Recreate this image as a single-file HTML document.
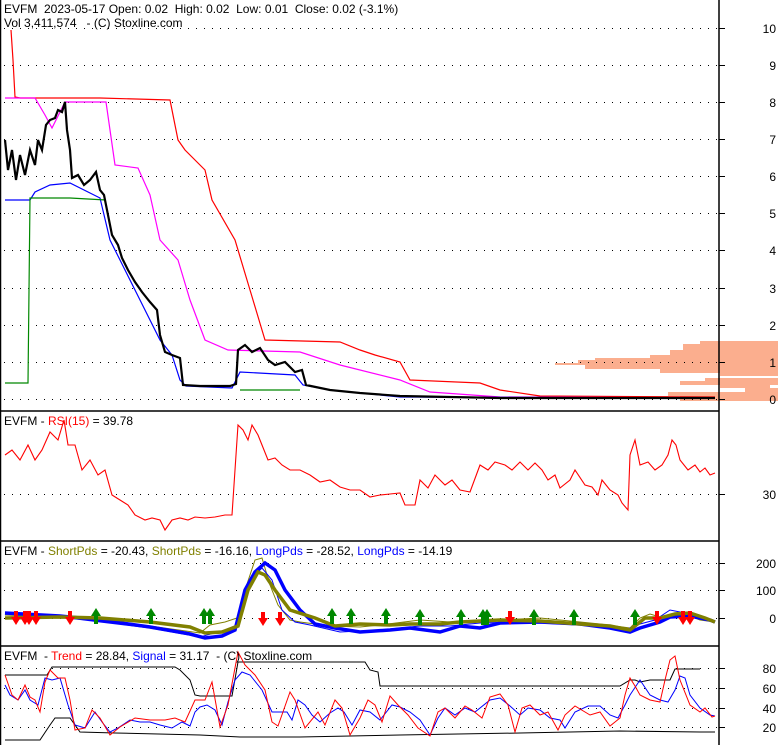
<!DOCTYPE html>
<html><head><meta charset="utf-8"><style>
html,body{margin:0;padding:0;background:#fff;}
svg{display:block;font-family:"Liberation Sans",Arial,sans-serif;}
text{white-space:pre;}
</style></head><body>
<svg width="780" height="745" viewBox="0 0 780 745" xmlns="http://www.w3.org/2000/svg" xml:space="preserve">
<rect width="780" height="745" fill="#fff"/>
<g fill="#fbae8e">
<rect x="700" y="341" width="78" height="3"/>
<rect x="683" y="344" width="95" height="6"/>
<rect x="670" y="350" width="108" height="5"/>
<rect x="650" y="355" width="128" height="3"/>
<rect x="595" y="358" width="183" height="2"/>
<rect x="578" y="360" width="200" height="3"/>
<rect x="555" y="363" width="223" height="2"/>
<rect x="585" y="365" width="193" height="4"/>
<rect x="660" y="369" width="118" height="4"/>
<rect x="720" y="373" width="58" height="3"/>
<rect x="705" y="378" width="73" height="3"/>
<rect x="680" y="381" width="98" height="4"/>
<rect x="720" y="385" width="50" height="3"/>
<rect x="745" y="388" width="33" height="4"/>
<rect x="668" y="392" width="110" height="4"/>
<rect x="680" y="396" width="98" height="5"/>
</g>
<g stroke="#000" stroke-width="1" stroke-dasharray="1,7">
<line x1="4" y1="28.5" x2="718" y2="28.5"/><line x1="4" y1="65.5" x2="718" y2="65.5"/>
<line x1="4" y1="102.5" x2="718" y2="102.5"/><line x1="4" y1="139.5" x2="718" y2="139.5"/>
<line x1="4" y1="176.5" x2="718" y2="176.5"/><line x1="4" y1="213.5" x2="718" y2="213.5"/>
<line x1="4" y1="250.5" x2="718" y2="250.5"/><line x1="4" y1="288.5" x2="718" y2="288.5"/>
<line x1="4" y1="325.5" x2="718" y2="325.5"/><line x1="4" y1="362.5" x2="718" y2="362.5"/>
<line x1="4" y1="399.5" x2="718" y2="399.5"/>
<line x1="4" y1="494.5" x2="718" y2="494.5"/>
<line x1="4" y1="563.5" x2="718" y2="563.5"/><line x1="4" y1="590.5" x2="718" y2="590.5"/><line x1="4" y1="618.5" x2="718" y2="618.5"/>
<line x1="4" y1="668.5" x2="718" y2="668.5"/><line x1="4" y1="688.5" x2="718" y2="688.5"/><line x1="4" y1="708.5" x2="718" y2="708.5"/><line x1="4" y1="727.5" x2="718" y2="727.5"/>
</g>
<g stroke="#000" stroke-width="1.5" fill="none">
<line x1="0.5" y1="0" x2="0.5" y2="745"/>
<line x1="719" y1="0" x2="719" y2="745"/>
<line x1="0" y1="411" x2="719" y2="411"/>
<line x1="0" y1="541" x2="719" y2="541"/>
<line x1="0" y1="646" x2="719" y2="646"/>
</g>
<g stroke="#000">
<line x1="719" y1="28.5" x2="725" y2="28.5"/><line x1="719" y1="65.5" x2="725" y2="65.5"/><line x1="719" y1="102.5" x2="725" y2="102.5"/><line x1="719" y1="139.5" x2="725" y2="139.5"/><line x1="719" y1="176.5" x2="725" y2="176.5"/><line x1="719" y1="213.5" x2="725" y2="213.5"/><line x1="719" y1="250.5" x2="725" y2="250.5"/><line x1="719" y1="288.5" x2="725" y2="288.5"/><line x1="719" y1="325.5" x2="725" y2="325.5"/><line x1="719" y1="362.5" x2="725" y2="362.5"/><line x1="719" y1="399.5" x2="725" y2="399.5"/>
<line x1="719" y1="494.5" x2="725" y2="494.5"/>
<line x1="719" y1="563.5" x2="725" y2="563.5"/><line x1="719" y1="590.5" x2="725" y2="590.5"/><line x1="719" y1="618.5" x2="725" y2="618.5"/>
<line x1="719" y1="668.5" x2="725" y2="668.5"/><line x1="719" y1="688.5" x2="725" y2="688.5"/><line x1="719" y1="708.5" x2="725" y2="708.5"/><line x1="719" y1="727.5" x2="725" y2="727.5"/>
</g>
<g font-size="12" fill="#000" text-anchor="end">
<text x="776" y="33">10</text><text x="776" y="70">9</text><text x="776" y="107">8</text><text x="776" y="144">7</text><text x="776" y="181">6</text><text x="776" y="218">5</text><text x="776" y="255">4</text><text x="776" y="293">3</text><text x="776" y="330">2</text><text x="776" y="367">1</text><text x="776" y="404">0</text>
<text x="776" y="499">30</text>
<text x="776" y="568">200</text><text x="776" y="595">100</text><text x="776" y="623">0</text>
<text x="776" y="673">80</text><text x="776" y="693">60</text><text x="776" y="713">40</text><text x="776" y="732">20</text>
</g>
<g fill="none" stroke-width="1.2">
<polyline stroke="#f00" points="11,30 13,60 15,97 20,98 100,98 170,100 178,140 185,150 205,170 212,200 235,240 250,290 265,340 340,342 360,350 375,355 400,362 410,380 480,383 500,390 540,396 715,397"/>
<polyline stroke="#f0f" points="5,98 35,98 45,115 52,128 65,102 106,102 110,130 115,165 138,168 150,195 160,240 178,260 190,300 205,340 228,350 300,352 340,365 400,380 430,392 500,397 715,398"/>
<polyline stroke="#00f" points="5,200 30,200 35,192 50,185 70,183 100,198 110,240 125,270 140,300 160,340 172,355 180,380 186,386 232,388 240,372 295,375 303,385 330,390 400,397 715,398"/>
<polyline stroke="#080" points="5,383 28,383 30,198 70,198 106,200"/>
<polyline stroke="#080" points="240,390 300,390"/>
<polyline stroke="#000" stroke-width="2.2" points="5,140 8,170 12,150 16,180 20,155 25,175 30,150 35,165 38,140 42,150 46,125 50,120 55,118 58,110 62,112 65,102 67,130 70,150 72,178 78,175 84,185 90,180 96,172 100,190 104,195 108,215 112,235 118,245 122,258 128,270 135,282 142,292 150,302 157,310 160,335 165,352 172,355 180,358 183,385 200,386 230,386 236,384 238,350 245,345 252,352 260,348 268,360 275,365 285,362 295,372 302,370 306,385 330,390 360,393 400,396 500,398 715,398"/>
</g>
<polyline fill="none" stroke="#f00" stroke-width="1.1" points="5,455 12,450 20,460 28,445 35,460 42,450 50,432 58,440 64,420 68,445 75,445 82,470 90,460 98,475 105,470 112,495 120,500 128,505 135,515 145,520 152,518 160,520 165,530 172,520 180,518 188,520 195,517 205,518 215,517 225,515 232,515 238,425 243,430 248,440 252,425 258,435 262,445 268,460 275,458 282,465 290,470 300,470 310,475 320,482 330,480 340,487 350,490 360,490 370,497 380,495 390,494 400,493 405,505 415,505 420,480 428,488 435,475 445,485 452,480 460,490 470,492 480,465 488,470 495,462 505,465 512,470 520,462 528,470 535,463 542,470 548,480 555,475 560,488 570,480 575,470 585,485 592,487 598,495 602,480 610,490 618,495 622,503 628,510 630,455 635,440 640,465 648,462 655,470 662,465 668,455 672,440 676,445 680,460 688,470 695,465 700,472 705,468 710,475 715,473"/>
<g fill="none">
<polyline stroke="#808000" stroke-width="1" points="5,615 60,617 100,620 150,626 200,633 210,625 225,622 237,618 245,590 255,560 262,558 270,585 278,605 290,620 300,622 330,626 360,627 380,625 420,620 450,622 480,620 500,620 540,618 600,624 630,628 640,618 650,614 660,617 680,612 700,620 715,622"/>
<polyline stroke="#00f" stroke-width="1" points="5,612 60,617 100,622 150,628 200,637 225,630 237,625 245,600 255,575 262,568 272,580 282,610 295,622 310,625 340,632 380,630 420,626 450,626 480,623 520,622 560,624 600,626 625,630 640,624 655,620 670,610 680,612 700,618 715,622"/>
<polyline stroke="#00f" stroke-width="3.5" points="5,613 60,616 100,620 150,627 190,634 205,638 222,636 235,630 245,590 255,572 265,563 275,570 285,590 300,610 315,624 335,628 360,632 390,630 410,628 440,632 460,626 480,628 500,623 540,622 580,624 610,628 630,632 640,628 660,622 670,617 690,616 710,620 715,622"/>
<polyline stroke="#808000" stroke-width="3.5" points="5,618 60,617 100,618 150,622 190,627 205,633 222,632 238,626 248,590 258,572 265,575 275,590 290,610 315,618 335,626 360,624 390,625 410,624 440,624 460,622 500,620 540,621 580,624 610,626 630,630 645,618 660,618 675,614 690,613 705,618 715,622"/>
</g>
<g fill="#080">
<path d="M96,608 l-5,8 h3 v8 h4 v-8 h3z"/><path d="M151,608 l-5,8 h3 v8 h4 v-8 h3z"/>
<path d="M204,608 l-5,8 h3 v8 h4 v-8 h3z"/><path d="M210,608 l-5,8 h3 v8 h4 v-8 h3z"/>
<path d="M332,608 l-5,8 h3 v8 h4 v-8 h3z"/><path d="M351,608 l-5,8 h3 v8 h4 v-8 h3z"/><path d="M386,608 l-5,8 h3 v8 h4 v-8 h3z"/>
<path d="M420,609 l-5,8 h3 v8 h4 v-8 h3z"/><path d="M461,609 l-5,8 h3 v8 h4 v-8 h3z"/><path d="M483,609 l-5,8 h3 v8 h4 v-8 h3z"/><path d="M487,609 l-5,8 h3 v8 h4 v-8 h3z"/>
<path d="M534,609 l-5,8 h3 v8 h4 v-8 h3z"/><path d="M574,609 l-5,8 h3 v8 h4 v-8 h3z"/><path d="M635,609 l-5,8 h3 v8 h4 v-8 h3z"/>
</g>
<g fill="#f00">
<path d="M16,625 l-5,-8 h3 v-6 h4 v6 h3z"/><path d="M25,625 l-5,-8 h3 v-6 h4 v6 h3z"/><path d="M29,625 l-5,-8 h3 v-6 h4 v6 h3z"/><path d="M36,625 l-5,-8 h3 v-6 h4 v6 h3z"/>
<path d="M70,625 l-5,-8 h3 v-6 h4 v6 h3z"/><path d="M263,626 l-5,-8 h3 v-6 h4 v6 h3z"/><path d="M280,626 l-5,-8 h3 v-6 h4 v6 h3z"/>
<path d="M510,625 l-5,-8 h3 v-6 h4 v6 h3z"/><path d="M657,625 l-5,-8 h3 v-6 h4 v6 h3z"/><path d="M683,625 l-5,-8 h3 v-6 h4 v6 h3z"/><path d="M690,625 l-5,-8 h3 v-6 h4 v6 h3z"/>
</g>
<g fill="none" stroke-width="1">
<polyline stroke="#000" points="5,675 47,675 52,667 175,667 180,670 190,680 195,695 200,696 232,696 238,662 365,662 370,670 378,672 380,686 620,686 630,680 635,680 640,682 650,680 670,680 675,669 700,669"/>
<polyline stroke="#000" points="5,740 40,740 50,725 55,718 70,718 75,725 80,732 115,733 200,735 240,737 300,737 400,735 520,733 620,731 700,732 715,732"/>
<polyline stroke="#00f" points="5,685 10,695 18,700 25,690 30,700 38,705 45,678 52,680 60,678 68,705 75,725 85,728 95,712 102,722 110,732 118,728 130,720 140,722 150,722 160,725 172,728 182,722 190,726 195,712 200,707 207,705 215,710 222,725 228,702 235,680 242,672 250,675 262,690 272,712 280,712 287,712 292,720 298,700 305,705 312,715 320,722 330,713 338,708 344,712 352,725 360,710 370,712 380,720 392,705 400,707 410,712 420,720 430,735 438,718 445,708 455,715 465,708 475,712 490,700 500,698 510,706 520,715 528,708 540,710 550,718 560,720 565,728 575,712 588,706 600,706 610,715 618,718 625,705 630,695 640,680 650,695 660,700 668,702 675,690 680,676 685,678 690,695 700,708 710,715 715,716"/>
<polyline stroke="#f00" points="5,675 12,695 18,700 25,685 30,697 35,700 40,712 45,682 50,670 58,678 65,678 70,700 75,730 85,728 92,710 100,718 110,735 120,727 135,718 150,720 165,720 175,718 185,722 195,700 205,700 212,682 220,727 228,705 238,652 245,665 255,675 265,690 272,722 278,726 290,692 295,700 305,728 318,712 325,725 335,700 342,708 350,735 360,718 368,700 375,705 382,722 390,696 398,705 408,715 418,728 430,736 438,712 445,708 455,718 465,706 472,710 482,718 490,697 500,694 508,705 515,732 522,708 530,705 540,715 548,712 558,730 565,715 575,706 590,715 600,712 610,726 620,718 625,695 630,678 635,686 640,695 650,700 660,702 665,680 670,660 675,656 680,680 690,705 700,712 705,708 712,717 715,716"/>
</g>
<g font-size="12" fill="#000">
<text x="4" y="13">EVFM  2023-05-17 Open: 0.02  High: 0.02  Low: 0.01  Close: 0.02 (-3.1%)</text>
<text x="4" y="27">Vol 3,411,574   - (C) Stoxline.com</text>
<text x="4" y="425">EVFM - <tspan fill="#f00">RSI(15)</tspan> = 39.78</text>
<text x="4" y="555">EVFM - <tspan fill="#808000">ShortPds</tspan> = -20.43, <tspan fill="#808000">ShortPds</tspan> = -16.16, <tspan fill="#00f">LongPds</tspan> = -28.52, <tspan fill="#00f">LongPds</tspan> = -14.19</text>
<text x="4" y="660">EVFM  - <tspan fill="#f00">Trend</tspan> = 28.84, <tspan fill="#00f">Signal</tspan> = 31.17  - (C) Stoxline.com</text>
</g>
</svg>
</body></html>
